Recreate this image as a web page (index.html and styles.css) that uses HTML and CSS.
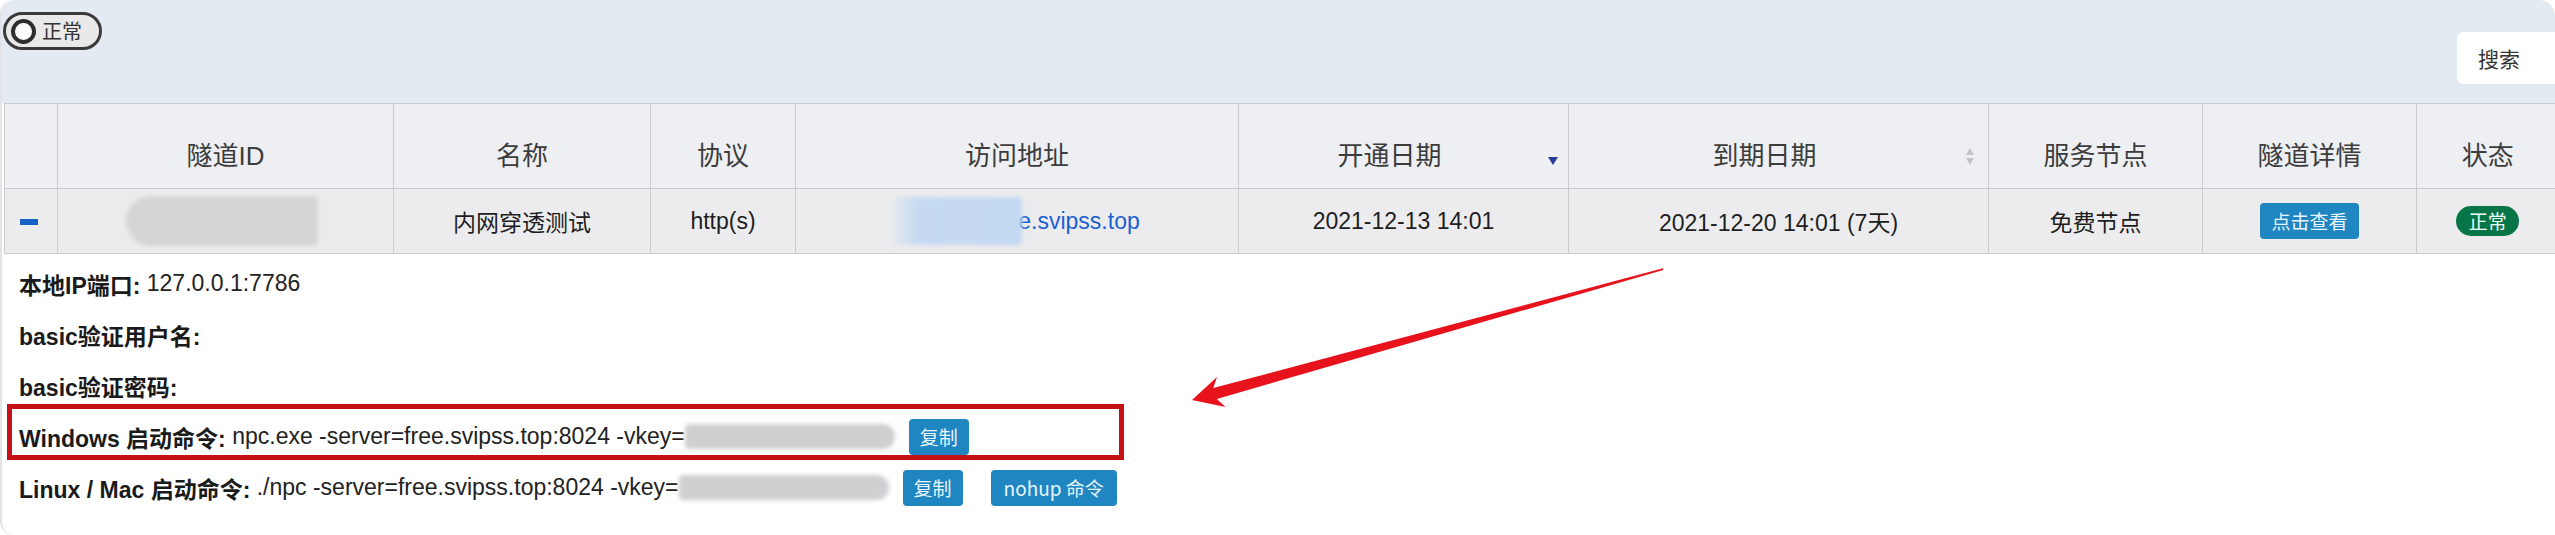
FILE: index.html
```html
<!DOCTYPE html>
<html lang="zh-CN">
<head>
    <meta charset="UTF-8">
    <title>隧道列表</title>
    <link rel="stylesheet" href="styles.css">
</head>
<body>

<div id="wrap">

    <div class="toolbar">
        <div class="switch"><i></i><span>正常</span></div>
        <div class="search">搜索</div>
    </div>

    <table class="list">
        <colgroup>
            <col style="width: 53px">
            <col style="width: 336px">
            <col style="width: 257px">
            <col style="width: 145px">
            <col style="width: 443px">
            <col style="width: 330px">
            <col style="width: 420px">
            <col style="width: 214px">
            <col style="width: 214px">
            <col style="width: 142px">
        </colgroup>
        <thead>
            <tr>
                <th></th>
                <th>隧道ID</th>
                <th>名称</th>
                <th>协议</th>
                <th>访问地址</th>
                <th class="sort desc">开通日期</th>
                <th class="sort both">到期日期</th>
                <th>服务节点</th>
                <th>隧道详情</th>
                <th>状态</th>
            </tr>
        </thead>
        <tbody>
            <tr>
                <td><span class="minus"></span></td>
                <td><span class="blur-id"></span></td>
                <td>内网穿透测试</td>
                <td>http(s)</td>
                <td><span class="blur-host"></span><a href="#">e.svipss.top</a></td>
                <td>2021-12-13 14:01</td>
                <td>2021-12-20 14:01 (7天)</td>
                <td>免费节点</td>
                <td><span class="btn">点击查看</span></td>
                <td><span class="badge">正常</span></td>
            </tr>
        </tbody>
    </table>

    <!--展开后的隧道详情-->
    <div class="detail">
        <p><b>本地IP端口:</b> 127.0.0.1:7786</p>
        <p><b>basic验证用户名:</b></p>
        <p><b>basic验证密码:</b></p>
        <p><b>Windows 启动命令:</b> npc.exe -server=free.svipss.top:8024 -vkey=<span class="blur-key"></span><span class="btn copy">复制</span></p>
        <p><b>Linux / Mac 启动命令:</b> ./npc -server=free.svipss.top:8024 -vkey=<span class="blur-key"></span><span class="btn copy">复制</span><span class="btn nohup">nohup 命令</span></p>
    </div>

    <!--截图上的标注:红框和箭头-->
    <svg class="mark" width="2555" height="535" viewBox="0 0 2555 535">
        <rect x="9.5" y="406.5" width="1112" height="51" fill="none" stroke="#c70f16" stroke-width="5"/>
        <polygon fill="#e8121c" points="1192,400 1217,377 1213.3,388 1663,268.3 1663.3,269.9 1216.8,399 1225.5,407"/>
    </svg>

</div>

</body>
</html>
```

FILE: styles.css
```css
* {
    margin: 0;
    padding: 0;
    box-sizing: border-box;
}

body {
    width: 2555px;
    height: 535px;
    overflow: hidden;
    background: #fff;
    font-family: "Liberation Sans", "Noto Sans CJK SC", sans-serif;
    color: #222;
}

a {
    text-decoration: none;
}

#wrap {
    position: relative;
    width: 2555px;
    height: 535px;
    overflow: hidden;
    border-left: 2px solid #e2e4e8;
    border-radius: 14px 16px 0 14px;
    background: #fff;
}

/* 顶部工具栏 */
.toolbar {
    display: flex;
    justify-content: space-between;
    align-items: flex-start;
    height: 103px;
    padding-left: 1px;
    background: #e4eaf2;
}
.toolbar .switch {
    display: flex;
    align-items: center;
    margin-top: 12px;
    width: 99px;
    height: 38px;
    padding-left: 5px;
    border: 3px solid #3a3a3a;
    border-radius: 19px;
    background: #e9e9ea;
}
.toolbar .switch i {
    width: 25px;
    height: 25px;
    border: 4px solid #2e2e2e;
    border-radius: 50%;
    background: #fff;
}
.toolbar .switch span {
    margin-left: 6px;
    font-family: "Noto Sans CJK SC", sans-serif;
    font-size: 20px;
    line-height: 1;
    color: #333;
}
.toolbar .search {
    margin-top: 32px;
    margin-right: -20px;
    width: 118px;
    height: 52px;
    padding-left: 21px;
    border-radius: 6px;
    background: #fff;
    font-family: "Noto Sans CJK SC", sans-serif;
    font-size: 21px;
    line-height: 52px;
    color: #333;
}

/* 隧道表格 */
.list {
    margin-left: 2px;
    width: 2554px;
    table-layout: fixed;
    border-collapse: collapse;
}
.list th,
.list td {
    border: 1px solid #cbcbcd;
    text-align: center;
    vertical-align: middle;
    white-space: nowrap;
}
.list th {
    position: relative;
    height: 85px;
    padding-top: 14px;
    background: #eeeff3;
    font-family: "Liberation Sans", "Noto Sans CJK SC", sans-serif;
    font-size: 26px;
    font-weight: normal;
    color: #3c3c3c;
}
.list tr th:last-child,
.list tr td:last-child {
    border-right: none;
}
.list td {
    height: 65px;
    background: #ececee;
    font-size: 23px;
    color: #1e1e1e;
}
.list th.sort {
    padding-right: 28px;
}
.list th.desc::after {
    content: "";
    position: absolute;
    right: 10px;
    top: 53px;
    border-left: 5.5px solid transparent;
    border-right: 5.5px solid transparent;
    border-top: 8px solid #2c3a9c;
}
.list th.both::before,
.list th.both::after {
    content: "";
    position: absolute;
    right: 14px;
    border-left: 4px solid transparent;
    border-right: 4px solid transparent;
}
.list th.both::before {
    top: 44px;
    border-bottom: 7px solid #c4c4c8;
}
.list th.both::after {
    top: 54px;
    border-top: 7px solid #c4c4c8;
}

.list .minus {
    display: inline-block;
    width: 18px;
    height: 6px;
    margin-left: -4px;
    background: #1462c6;
    vertical-align: middle;
}
.list .blur-id {
    display: inline-block;
    width: 192px;
    height: 50px;
    margin-left: -8px;
    border-radius: 25px 4px 4px 25px;
    background: #d5d5d7;
    filter: blur(2px);
    vertical-align: middle;
}
.list .blur-host {
    display: inline-block;
    width: 128px;
    height: 48px;
    margin-right: -4px;
    border-radius: 4px;
    background: linear-gradient(90deg, #e4e8ee 0%, #c5daf2 18%, #c3d8f1 100%);
    filter: blur(2px);
    vertical-align: middle;
}
.list td a {
    color: #1c5fd2;
    vertical-align: middle;
}

.btn {
    display: inline-block;
    height: 36px;
    padding: 0 11px;
    border-radius: 4px;
    background: #1f86c1;
    font-family: "Noto Sans CJK SC", sans-serif;
    font-size: 19px;
    line-height: 36px;
    color: #e8f6ff;
    vertical-align: middle;
}
.badge {
    display: inline-block;
    width: 63px;
    height: 30px;
    border-radius: 15px;
    background: #087548;
    font-family: "Noto Sans CJK SC", sans-serif;
    font-size: 19px;
    line-height: 30px;
    color: #eafff6;
    vertical-align: middle;
}

/* 展开详情 */
.detail {
    padding: 4px 0 0 17px;
    font-size: 23px;
    color: #222;
}
.detail p {
    display: flex;
    align-items: center;
    height: 51px;
    white-space: pre;
}
.detail p b {
    color: #1a1a1a;
}
.detail .blur-key {
    width: 210px;
    height: 25px;
    border-radius: 4px 12px 12px 4px;
    background: #cfcfd1;
    filter: blur(2px);
}
.detail .copy {
    margin-left: 14px;
}
.detail .nohup {
    margin-left: 28px;
    padding: 0 13px;
}

.mark {
    position: absolute;
    left: -2px;
    top: 0;
    pointer-events: none;
}
```
